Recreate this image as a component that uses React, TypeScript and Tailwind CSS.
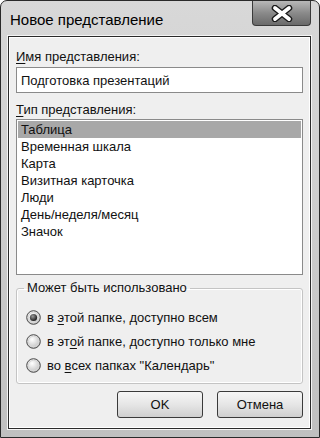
import React from "react";

const font = { fontFamily: '"Liberation Sans", Arial, sans-serif' };

function Radio({ checked }: { checked?: boolean }) {
  return (
    <svg width="15" height="15" viewBox="0 0 15 15" className="shrink-0">
      <defs>
        <radialGradient id="rg" cx="0.4" cy="0.35" r="0.7">
          <stop offset="0" stopColor="#ffffff" />
          <stop offset="1" stopColor="#bdbdbd" />
        </radialGradient>
        <radialGradient id="dot" cx="0.4" cy="0.35" r="0.7">
          <stop offset="0" stopColor="#9a9a9a" />
          <stop offset="1" stopColor="#111111" />
        </radialGradient>
      </defs>
      <circle cx="7.5" cy="7.5" r="6.8" fill="url(#rg)" stroke="#4a4a4a" strokeWidth="1" />
      <circle cx="7.5" cy="7.5" r="5.2" fill="none" stroke="#d8d8d8" strokeWidth="1" />
      {checked && <circle cx="7.5" cy="7.5" r="3.6" fill="url(#dot)" />}
    </svg>
  );
}

export default function App() {
  const items = [
    "Таблица",
    "Временная шкала",
    "Карта",
    "Визитная карточка",
    "Люди",
    "День/неделя/месяц",
    "Значок",
  ];
  return (
    <div
      className="w-[320px] h-[438px] relative overflow-hidden rounded-t-[7px] border border-[#2a2a2a] bg-gradient-to-b from-[#d8d8d8] via-[#cdcdcd] to-[#c0c0c0] flex flex-col"
      style={font}
    >
      {/* Title bar */}
      <div className="h-[35px] flex items-start justify-between shrink-0 pr-[8px]">
        <div className="pl-[9px] pt-[9px] text-[15px] leading-[20px] text-black">Новое представление</div>
        <div className="w-[59px] h-[25px] rounded-b-[4px] border border-t-0 border-[#3a3a3a] bg-gradient-to-b from-[#b8b8b8] via-[#8a8a8a] to-[#6a6a6a] flex items-center justify-center">
          <svg width="24" height="17" viewBox="0 0 24 17">
            <path d="M5 3 L19 14 M19 3 L5 14" stroke="#1a1a1a" strokeWidth="6.5" strokeLinecap="round" />
            <path d="M5 3 L19 14 M19 3 L5 14" stroke="#ffffff" strokeWidth="3.8" strokeLinecap="round" />
          </svg>
        </div>
      </div>

      {/* Client area */}
      <div className="ml-[7px] mr-[8px] mb-[8px] flex-1 border border-[#2a2a2a] bg-[#efefef] shadow-[0_0_0_1px_#f4f4f4] text-[13px] leading-[17px] text-[#111]">
        <div className="border border-white h-full flex flex-col px-[6px]">
          <div className="pt-[10px] h-[29px]">
            <span className="underline underline-offset-2">И</span>мя представления:
          </div>
          <div className="h-[26px] border border-[#8a8a8a] bg-white flex items-center px-[4px]">
            Подготовка презентаций
          </div>
          <div className="pt-[8px] h-[26px]">
            <span className="underline underline-offset-2">Т</span>ип представления:
          </div>
          <div className="h-[156px] border border-[#8a8a8a] bg-white p-[1px] flex flex-col">
            {items.map((t, i) => (
              <div
                key={t}
                className={`h-[17px] pl-[3px] flex items-center ${i === 0 ? "bg-[#a8a8a8]" : ""}`}
              >
                {t}
              </div>
            ))}
          </div>

          {/* Group box */}
          <fieldset className="mt-[4px] h-[105px] border border-[#c4c4c4] rounded-[3px] shadow-[inset_0_0_0_1px_#ffffff] px-[9px] m-0 min-w-0">
            <legend className="ml-[-2px] px-[3px] leading-[18px]">Может быть использовано</legend>
            <div className="flex flex-col pt-[13px] gap-[9px]">
              <div className="flex items-center gap-[6px] h-[15px]">
                <Radio checked />
                <span>
                  в <span className="underline underline-offset-2">э</span>той папке, доступно всем
                </span>
              </div>
              <div className="flex items-center gap-[6px] h-[15px]">
                <Radio />
                <span>
                  в эт<span className="underline underline-offset-2">о</span>й папке, доступно только мне
                </span>
              </div>
              <div className="flex items-center gap-[6px] h-[15px]">
                <Radio />
                <span>
                  во <span className="underline underline-offset-2">в</span>сех папках "Календарь"
                </span>
              </div>
            </div>
          </fieldset>

          {/* Buttons */}
          <div className="flex justify-end gap-[14px] mt-[7px]">
            <div className="w-[86px] h-[27px] rounded-[3px] border border-[#3a3a3a] bg-gradient-to-b from-[#f6f6f6] via-[#e6e6e6] to-[#cfcfcf] flex items-center justify-center">
              OK
            </div>
            <div className="w-[86px] h-[27px] rounded-[3px] border border-[#3a3a3a] bg-gradient-to-b from-[#f6f6f6] via-[#e6e6e6] to-[#cfcfcf] flex items-center justify-center">
              Отмена
            </div>
          </div>
        </div>
      </div>
    </div>
  );
}
